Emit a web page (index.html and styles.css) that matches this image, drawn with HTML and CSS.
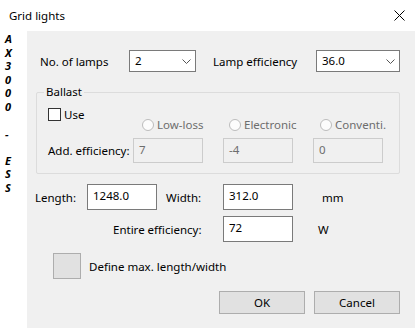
FILE: index.html
```html
<!DOCTYPE html>
<html>
<head>
<meta charset="utf-8">
<link rel="stylesheet" href="styles.css">
</head>
<body>
<div class="window">
  <div class="titlebar">
    <span class="title">Grid lights</span>
    <svg class="close" width="11" height="11" viewBox="0 0 11 11"><path d="M0.5 0.5 L10.5 10.5 M10.5 0.5 L0.5 10.5" stroke="#000" stroke-width="1" fill="none"/></svg>
  </div>
  <div class="main">
    <div class="side">
      <span>A</span><span>X</span><span>3</span><span>0</span><span>0</span><span>0</span><span>&nbsp;</span><span>-</span><span>&nbsp;</span><span>E</span><span>S</span><span>S</span>
    </div>
    <div class="panel">
      <div class="row r1">
        <span class="lbl l-lamps">No. of lamps</span>
        <div class="combo c-lamps"><span>2</span><svg class="chev" width="9" height="5" viewBox="0 0 9 5"><path d="M0.5 0.5 L4.5 4.5 L8.5 0.5" stroke="#555" fill="none"/></svg></div>
        <span class="lbl l-eff">Lamp efficiency</span>
        <div class="combo c-eff"><span>36.0</span><svg class="chev" width="9" height="5" viewBox="0 0 9 5"><path d="M0.5 0.5 L4.5 4.5 L8.5 0.5" stroke="#555" fill="none"/></svg></div>
      </div>

      <div class="group">
        <span class="legend">Ballast</span>
        <div class="gcol gleft">
          <div class="check"><span class="box"></span><span>Use</span></div>
          <span class="lbl l-add">Add. efficiency:</span>
        </div>
        <div class="gcol opt o1">
          <div class="radio"><span class="circle"></span><span>Low-loss</span></div>
          <div class="field dis">7</div>
        </div>
        <div class="gcol opt o2">
          <div class="radio"><span class="circle"></span><span>Electronic</span></div>
          <div class="field dis">-4</div>
        </div>
        <div class="gcol opt o3">
          <div class="radio"><span class="circle"></span><span>Conventi.</span></div>
          <div class="field dis">0</div>
        </div>
      </div>

      <div class="row r-len">
        <span class="lbl l-len">Length:</span>
        <div class="field">1248.0</div>
        <span class="lbl l-wid">Width:</span>
        <div class="field">312.0</div>
        <span class="lbl unit-mm">mm</span>
      </div>

      <div class="row r-ent">
        <span class="lbl l-ent">Entire efficiency:</span>
        <div class="field">72</div>
        <span class="lbl unit-w">W</span>
      </div>

      <div class="row r-def">
        <span class="bigbox"></span>
        <span class="lbl l-def">Define max. length/width</span>
      </div>

      <div class="row r-btn">
        <div class="btn">OK</div>
        <div class="btn">Cancel</div>
      </div>
    </div>
  </div>
</div>
</body>
</html>
```
FILE: styles.css
```css
* { box-sizing: border-box; }
html, body { margin: 0; padding: 0; }
body {
  width: 415px;
  height: 328px;
  overflow: hidden;
  background: #fff;
  font-family: "Noto Sans", "Open Sans", sans-serif;
  font-size: 11.5px;
  color: #000;
}
.window { width: 415px; height: 328px; display: flex; flex-direction: column; }
.titlebar {
  height: 31px;
  background: #fff;
  display: flex;
  align-items: center;
  padding-left: 9px;
  padding-right: 10px;
  justify-content: space-between;
}
.title { font-size: 11.5px; margin-top: -1px; }
.close { margin-top: -1px; }
.main { flex: 1; display: flex; }
.side {
  width: 27px;
  background: #fff;
  display: flex;
  flex-direction: column;
  padding-top: 1px;
  padding-left: 5px;
  font-weight: bold;
  font-style: italic;
  font-size: 11px;
  line-height: 13.5px;
}
.panel {
  flex: 1;
  background: #f0f0f0;
  padding: 19px 15px 0 8px;
  display: flex;
  flex-direction: column;
}
.row { display: flex; align-items: center; }
.lbl { white-space: nowrap; }
.r1 { height: 22px; margin-left: 5px; }
.l-lamps { width: 89px; }
.l-eff { width: 103px; margin-left: 17px; }
.combo {
  height: 22px;
  background: #fff;
  border: 1px solid #7a7a7a;
  display: flex;
  align-items: center;
  justify-content: space-between;
  padding: 0 4px 0 5px;
}
.combo span { margin-top: -2px; }
.c-lamps { width: 67px; }
.c-eff { width: 84px; }

.group {
  position: relative;
  margin-top: 20px;
  margin-left: 1px;
  width: 364px;
  height: 82px;
  border: 1px solid #dcdcdc;
  border-radius: 2px;
  display: flex;
  padding: 0 0 0 11px;
}
.legend {
  position: absolute;
  top: -9px;
  left: 7px;
  padding: 0 2px;
  background: #f0f0f0;
  line-height: 16px;
}
.gcol { display: flex; flex-direction: column; }
.gleft { width: 85px; padding-top: 15px; }
.check { display: flex; align-items: center; height: 13px; }
.box {
  width: 13px; height: 13px;
  border: 1px solid #333;
  background: #fff;
  margin-right: 3px;
}
.l-add { margin-top: 17px; line-height: 25px; height: 25px; }
.opt { width: 70px; padding-top: 25px; }
.o2, .o3 { margin-left: 20px; }
.radio { display: flex; align-items: center; height: 13px; color: #6d6d6d; white-space: nowrap; }
.o1 .radio { padding-left: 9px; }
.o2 .radio { padding-left: 6px; }
.o3 .radio { padding-left: 7px; }
.circle {
  width: 12px; height: 12px;
  border-radius: 50%;
  border: 1px solid #bcbcbc;
  background: #fcfcfc;
  margin-right: 3px;
  flex: none;
}
.field {
  width: 70px;
  height: 26px;
  background: #fff;
  border: 1px solid #7a7a7a;
  padding: 2px 5px 0;
  line-height: 18px;
}
.field.dis {
  height: 25px;
  margin-top: 7px;
  background: #f0f0f0;
  border-color: #cccccc;
  color: #6d6d6d;
}

.r-len { margin-top: 10px; height: 26px; }
.l-len { width: 52px; }
.l-wid { width: 57px; margin-left: 9px; }
.unit-mm { margin-left: 29px; }

.r-ent { margin-top: 6px; height: 26px; }
.l-ent { margin-left: 78px; width: 110px; }
.unit-w { margin-left: 25px; }

.r-def { margin-top: 11px; }
.bigbox {
  width: 28px; height: 26px;
  margin-left: 18px;
  background: #e1e1e1;
  border: 1px solid #adadad;
}
.l-def { margin-left: 8px; }

.r-btn { margin-top: 12px; justify-content: flex-end; gap: 9px; }
.btn {
  width: 86px;
  height: 23px;
  background: #e1e1e1;
  border: 1px solid #adadad;
  display: flex;
  align-items: center;
  justify-content: center;
  padding-bottom: 1px;
}
```
